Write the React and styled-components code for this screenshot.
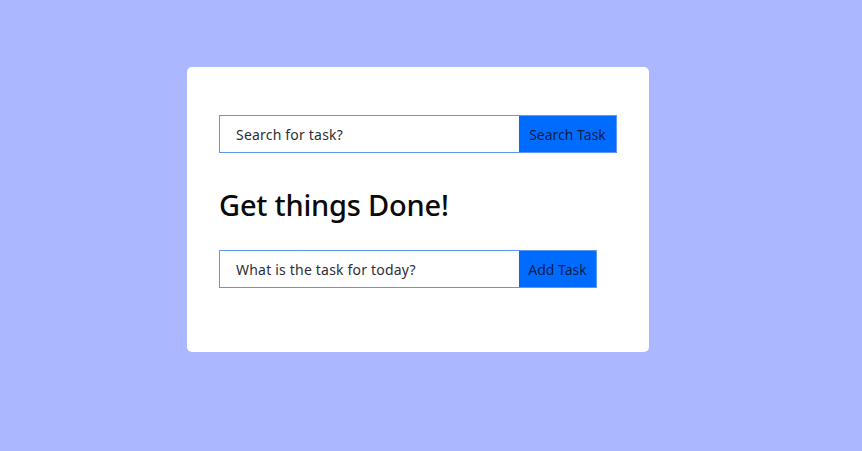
import React from 'react';
import styled, { createGlobalStyle } from 'styled-components';

const Global = createGlobalStyle`
  html, body {
    margin: 0;
    padding: 0;
    background: #abb8ff;
    font-family: "Noto Sans", "Open Sans", sans-serif;
  }
`;

const Page = styled.div`
  width: 862px;
  height: 451px;
  display: flex;
  justify-content: center;
  align-items: flex-start;
  padding: 67px 26px 0 0;
  box-sizing: border-box;
`;

const Card = styled.div`
  width: 462px;
  box-sizing: border-box;
  background: #fff;
  border-radius: 5px;
  padding: 48px 32px 64px;
  display: flex;
  flex-direction: column;
`;

const Row = styled.form`
  display: flex;
  height: 38px;
`;

const Input = styled.input`
  width: 300px;
  box-sizing: border-box;
  border: 1px solid #5f95f5;
  border-right: none;
  padding: 0 16px;
  font-family: inherit;
  font-size: 14px;
  letter-spacing: 0.2px;
  outline: none;
  &::placeholder {
    color: #2e2e3a;
  }
`;

const Button = styled.button`
  width: ${p => p.w}px;
  box-sizing: border-box;
  border: 1px solid #5f95f5;
  border-left: none;
  background: #006cff;
  color: #0c1d4a;
  font-family: inherit;
  font-size: 14px;
  padding: 0;
  cursor: pointer;
`;

const Title = styled.h1`
  margin: 32px 0 25px;
  font-size: 29px;
  font-weight: 500;
  color: #0a0a0a;
  line-height: 40px;
  letter-spacing: -0.2px;
`;

export default function App() {
  return (
    <Page>
      <Global />
      <Card>
        <Row onSubmit={e => e.preventDefault()}>
          <Input placeholder="Search for task?" />
          <Button w={98}>Search Task</Button>
        </Row>
        <Title>Get things Done!</Title>
        <Row onSubmit={e => e.preventDefault()}>
          <Input placeholder="What is the task for today?" />
          <Button w={78}>Add Task</Button>
        </Row>
      </Card>
    </Page>
  );
}
